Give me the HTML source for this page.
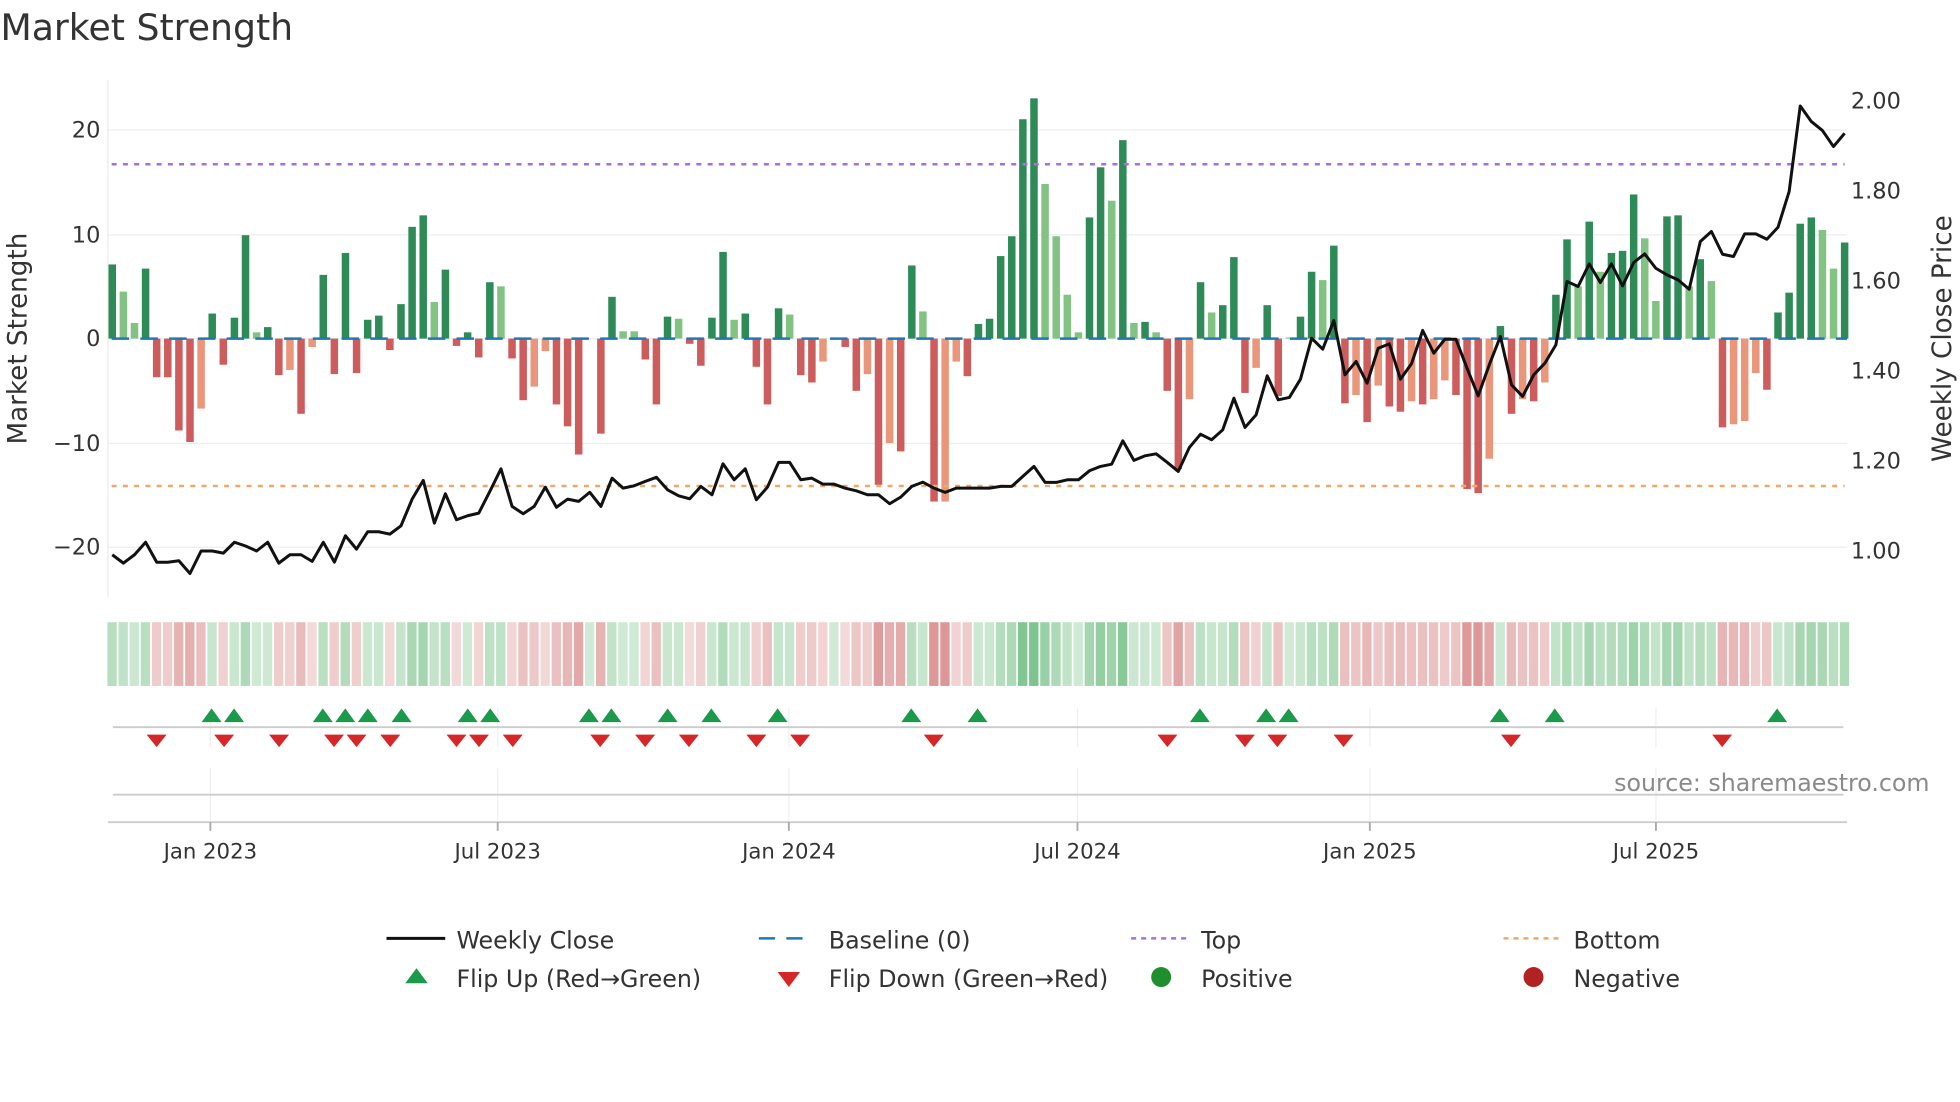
<!DOCTYPE html>
<html><head><meta charset="utf-8">
<style>
html,body{margin:0;padding:0;background:#fff;width:1960px;height:1102px;overflow:hidden}
svg{display:block}
text{font-family:"DejaVu Sans","Liberation Sans",sans-serif;fill:#333}
</style></head>
<body>
<svg id="s" width="1960" height="1102" viewBox="0 0 1568 882" xmlns="http://www.w3.org/2000/svg">
<rect width="1568" height="882" fill="#fff"/>
<text x="0" y="32" font-size="29">Market Strength</text>
<!-- grid -->
<g stroke="#eceef0" stroke-width="1">
<line x1="86" y1="104" x2="1478" y2="104"/>
<line x1="86" y1="188" x2="1478" y2="188"/>
<line x1="86" y1="271" x2="1478" y2="271"/>
<line x1="86" y1="355" x2="1478" y2="355"/>
<line x1="86" y1="438" x2="1478" y2="438"/>
</g>
<line x1="86" y1="64" x2="86" y2="478" stroke="#eee" stroke-width="1.2"/>
<g font-size="18" text-anchor="end">
<text x="80" y="110">20</text>
<text x="80" y="194">10</text>
<text x="80" y="277">0</text>
<text x="80" y="361">−10</text>
<text x="80" y="444">−20</text>
</g>
<g font-size="18">
<text x="1481" y="87">2.00</text>
<text x="1481" y="159">1.80</text>
<text x="1481" y="231">1.60</text>
<text x="1481" y="303">1.40</text>
<text x="1481" y="375">1.20</text>
<text x="1481" y="447">1.00</text>
</g>
<text font-size="21" text-anchor="middle" transform="translate(21,271) rotate(-90)">Market Strength</text>
<text font-size="21" text-anchor="middle" transform="translate(1561,271) rotate(-90)">Weekly Close Price</text>
<g id="bars"></g>
<line x1="89" y1="271" x2="1478" y2="271" stroke="#1f77b4" stroke-width="2" stroke-dasharray="14 9" id="base"/>
<line x1="89" y1="131.5" x2="1476" y2="131.5" stroke="#a66ee0" stroke-width="2" stroke-dasharray="4 5"/>
<line x1="89" y1="389" x2="1476" y2="389" stroke="#f0a868" stroke-width="2" stroke-dasharray="4 5"/>
<polyline id="price" fill="none" stroke="#111" stroke-width="2.4" stroke-linejoin="round"/>
<g id="heat"></g>
<!-- flip panel -->
<g stroke="#eceef0" stroke-width="1">
<line x1="168" y1="567" x2="168" y2="598"/><line x1="398" y1="567" x2="398" y2="598"/><line x1="631" y1="567" x2="631" y2="598"/><line x1="862" y1="567" x2="862" y2="598"/><line x1="1096" y1="567" x2="1096" y2="598"/><line x1="1325" y1="567" x2="1325" y2="598"/>
<line x1="168" y1="615" x2="168" y2="657"/><line x1="398" y1="615" x2="398" y2="657"/><line x1="631" y1="615" x2="631" y2="657"/><line x1="862" y1="615" x2="862" y2="657"/><line x1="1096" y1="615" x2="1096" y2="657"/><line x1="1325" y1="615" x2="1325" y2="657"/>
</g>
<line x1="90" y1="582" x2="1475" y2="582" stroke="#ccc" stroke-width="1.5"/>
<line x1="90" y1="636" x2="1475" y2="636" stroke="#ccc" stroke-width="1.5"/>
<line x1="86" y1="658" x2="1478" y2="658" stroke="#ccc" stroke-width="1.5"/>
<g stroke="#aaa" stroke-width="1.5">
<line x1="168" y1="658" x2="168" y2="665"/><line x1="398" y1="658" x2="398" y2="665"/><line x1="631" y1="658" x2="631" y2="665"/><line x1="862" y1="658" x2="862" y2="665"/><line x1="1096" y1="658" x2="1096" y2="665"/><line x1="1325" y1="658" x2="1325" y2="665"/>
</g>
<g id="flips"></g>
<text x="1544" y="633" font-size="19" text-anchor="end" fill="#8a8a8a" style="fill:#8a8a8a">source: sharemaestro.com</text>
<g font-size="17" text-anchor="middle">
<text x="168" y="687">Jan 2023</text>
<text x="398" y="687">Jul 2023</text>
<text x="631" y="687">Jan 2024</text>
<text x="862" y="687">Jul 2024</text>
<text x="1096" y="687">Jan 2025</text>
<text x="1325" y="687">Jul 2025</text>
</g>
<!-- legend -->
<line x1="309" y1="751" x2="356" y2="751" stroke="#111" stroke-width="2.4"/>
<line x1="607" y1="751" x2="651" y2="751" stroke="#1f77b4" stroke-width="2" stroke-dasharray="13 9"/>
<line x1="905" y1="751" x2="949" y2="751" stroke="#a66ee0" stroke-width="2" stroke-dasharray="4 4"/>
<line x1="1203" y1="751" x2="1247" y2="751" stroke="#f0a868" stroke-width="2" stroke-dasharray="4 4"/>
<polygon points="324,787 342,787 333,775" fill="#1a9a4a"/>
<polygon points="622,778 640,778 631,790" fill="#d62728"/>
<circle cx="929" cy="782" r="8" fill="#1f8f2e"/>
<circle cx="1227" cy="782" r="8" fill="#b22222"/>
<g font-size="19">
<text x="365" y="759">Weekly Close</text>
<text x="663" y="759">Baseline (0)</text>
<text x="961" y="759">Top</text>
<text x="1259" y="759">Bottom</text>
<text x="365" y="790">Flip Up (Red→Green)</text>
<text x="663" y="790">Flip Down (Green→Red)</text>
<text x="961" y="790">Positive</text>
<text x="1259" y="790">Negative</text>
</g>
</svg>
<script>
(function(){
var NS="http://www.w3.org/2000/svg";
var D="G7.1 g4.5 g1.5 G6.7 R-3.7 R-3.7 R-8.8 R-9.9 r-6.7 G2.4 R-2.5 G2.0 G9.9 g0.6 G1.1 R-3.5 r-3.0 R-7.2 r-0.8 G6.1 R-3.4 G8.2 R-3.3 G1.8 G2.2 R-1.1 G3.3 G10.7 G11.8 g3.5 G6.6 R-0.7 G0.6 R-1.8 G5.4 g5.0 R-1.9 R-5.9 r-4.6 r-1.2 R-6.3 R-8.4 R-11.1 Z0 R-9.1 G4.0 g0.7 g0.7 R-2.0 R-6.3 G2.1 g1.9 R-0.5 R-2.6 G2.0 G8.3 g1.8 G2.4 R-2.7 R-6.3 G2.9 g2.3 R-3.5 R-4.2 r-2.2 Z0 R-0.8 R-5.0 r-3.4 R-14.0 r-10.0 R-10.8 G7.0 g2.6 R-15.6 r-15.6 r-2.2 R-3.6 G1.4 G1.9 G7.9 G9.8 G21.0 G23.0 g14.8 g9.8 g4.2 g0.6 G11.6 G16.4 g13.2 G19.0 g1.5 G1.6 g0.6 R-5.0 R-12.5 r-5.8 G5.4 g2.5 G3.2 G7.8 R-5.2 r-2.8 G3.2 R-5.5 g0.1 G2.1 G6.4 g5.6 G8.9 R-6.2 r-5.4 R-8.0 r-4.5 R-6.5 R-7.0 r-6.0 R-6.3 r-5.8 r-4.0 R-5.4 R-14.4 R-14.8 r-11.5 G1.2 R-7.2 r-5.8 R-6.0 r-4.2 G4.2 G9.5 g5.0 G11.2 g6.4 G8.2 G8.4 G13.8 g9.6 g3.6 G11.7 G11.8 g5.0 G7.6 g5.5 R-8.5 r-8.2 r-7.9 r-3.3 R-4.9 G2.5 G4.4 G11.0 G11.6 g10.4 g6.7 G9.2".split(" ");
var P=[444,450.7,444,434,450,450,448.8,459,441,441,442.7,434,437,441,434,450.7,444,444,449.3,434,449.9,428.8,439.5,425.6,425.6,427.5,420.8,399.5,384.5,418.7,395.2,416,412.8,410.7,393.3,375.2,405.3,411.2,405.3,389.9,
406,399.5,401.3,394,405.3,382.7,390.7,388.8,385.3,382,392,396.8,399.2,389.3,396,371.2,384,375.2,400,389.9,370.1,370.1,384,382.7,387.5,387.5,390.7,392.8,396,396,403.2,397.9,389.3,385.9,390.7,394.1,390.7,390.7,390.7,390.7,
389.3,389.3,381.3,373.3,386.1,386.1,384,384,376.8,373.3,371.5,352.8,368.5,364.8,363.2,370.1,377.3,358.1,347.5,352,344,318.7,342.1,332,300.8,320,318.1,303.5,270.7,279.5,256.5,300,289.3,306.7,278.7,275.2,303.5,291,
264.5,282.7,271.5,271.5,294.7,316.8,292,269.3,308,317.3,300,290.7,276,225.3,229.3,211.2,226.1,211.2,228.8,210.1,203.2,214.7,220,224,231.5,193.3,185.3,203.5,205.3,187.2,187.2,191.5,181.9,153.3,84.8,97.3,104.5,117.3,106.7];
var col={G:"#2e8b57",g:"#82c282",R:"#cd5c5c",r:"#e9967a",Z:"#fff"};
var bars=document.getElementById("bars"),heat=document.getElementById("heat");
var pts=[];
function el(n,a,p){var e=document.createElementNS(NS,n);for(var k in a)e.setAttribute(k,a[k]);p.appendChild(e);return e;}
for(var i=0;i<D.length;i++){
 var c=D[i][0],v=parseFloat(D[i].slice(1)),x=89.5+8.888*i;
 var h=Math.abs(v)*8.36;
 if(h>0.5) el("rect",{x:x-3,y:v>0?271-h:271,width:6,height:h,fill:col[c]},bars);
 var f,o;
 if(v>=0){f="rgb(90,180,110)";o=0.28+0.5*Math.min(v/22,1);}
 else{f="rgb(205,100,100)";o=0.22+0.45*Math.min(-v/15,1);}
 el("rect",{x:x-3.9,y:498,width:7.5,height:51,fill:f,"fill-opacity":o},heat);
 pts.push(x.toFixed(1)+","+P[i]);
}
document.getElementById("price").setAttribute("points",pts.join(" "));
var fl=document.getElementById("flips");
[169,187,258,276,294,321,374,392,471,489,534,569,622,729,782,960,1013,1031,1200,1244,1422].forEach(function(x){
 el("polygon",{points:(x-8)+",578 "+(x+8)+",578 "+x+",567",fill:"#1a9a4a"},fl);});
[125,179,223,267,285,312,365,383,410,480,516,551,605,640,747,934,996,1022,1075,1209,1378].forEach(function(x){
 el("polygon",{points:(x-8)+",588 "+(x+8)+",588 "+x+",598",fill:"#d62728"},fl);});
})();
</script>
</body></html>
